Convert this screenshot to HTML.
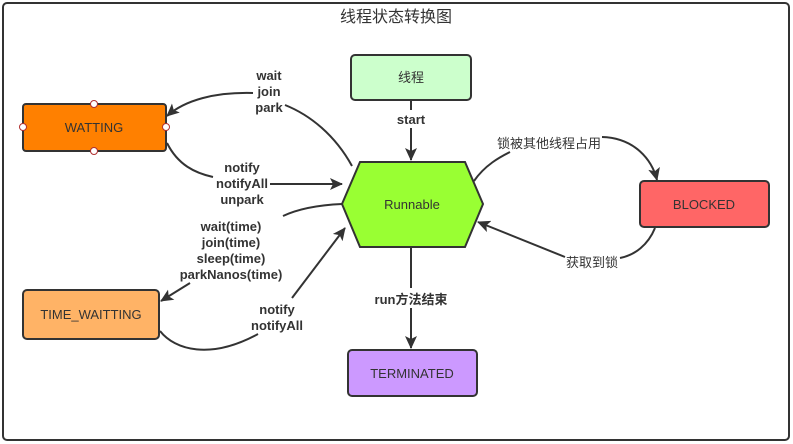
<!DOCTYPE html>
<html><head><meta charset="utf-8"><style>
html,body{margin:0;padding:0;background:#fff;}
svg{display:block;}
text{font-family:"Liberation Sans","Noto Sans CJK SC",sans-serif;fill:#333;}
.b{font-weight:bold;font-size:13px;}
.n{font-size:13px;}
</style></head><body>
<svg width="793" height="444" viewBox="0 0 793 444" xmlns="http://www.w3.org/2000/svg">
<defs><marker id="a" markerWidth="13" markerHeight="12" refX="12" refY="6" orient="auto" markerUnits="userSpaceOnUse"><path d="M0,0 L13,6 L0,12 L3,6 z" fill="#333"/></marker></defs>
<rect x="3" y="3" width="786" height="437" rx="4" fill="#fff" stroke="#333" stroke-width="2"/>
<text x="396" y="22" text-anchor="middle" font-size="16">线程状态转换图</text>
<g fill="none" stroke="#333" stroke-width="2">
<path d="M411,101 L411,110"/><path d="M411,128 L411,160" marker-end="url(#a)"/>
<path d="M352,166 C335,135 310,115 285,105"/>
<path d="M253,93 C215,92 185,100 167,116" marker-end="url(#a)"/>
<path d="M167,143 C178,165 195,173 213,177"/>
<path d="M270,184 L342,184" marker-end="url(#a)"/>
<path d="M342,204 C320,205 300,208 283,216"/>
<path d="M190,283 L161,301" marker-end="url(#a)"/>
<path d="M160,331 C175,350 210,360 258,334"/>
<path d="M292,298 L345,228" marker-end="url(#a)"/>
<path d="M411,247 L411,288"/><path d="M411,308 L411,348" marker-end="url(#a)"/>
<path d="M474,181 C485,165 500,157 510,152"/>
<path d="M602,137 C635,138 652,160 657,180" marker-end="url(#a)"/>
<path d="M655,228 C648,245 635,255 620,258"/>
<path d="M565,257 L478,222" marker-end="url(#a)"/>
</g>
<rect x="351" y="55" width="120" height="45" rx="4" fill="#ccffcc" stroke="#333" stroke-width="2"/>
<text x="411" y="82" text-anchor="middle" class="n">线程</text>
<rect x="23" y="104" width="143" height="47" rx="3" fill="#ff8000" stroke="#333" stroke-width="2"/>
<text x="94" y="132" text-anchor="middle" class="n">WATTING</text>
<g fill="#fff" stroke="#b03030" stroke-width="1"><circle cx="94" cy="104" r="3.5"/><circle cx="94" cy="151" r="3.5"/><circle cx="23" cy="127" r="3.5"/><circle cx="166" cy="127" r="3.5"/></g>
<polygon points="342,204 360,162 465,162 483,204 465,247 360,247" fill="#99ff33" stroke="#333" stroke-width="2"/>
<text x="412" y="209" text-anchor="middle" class="n">Runnable</text>
<rect x="640" y="181" width="129" height="46" rx="4" fill="#ff6666" stroke="#333" stroke-width="2"/>
<text x="704" y="209" text-anchor="middle" class="n">BLOCKED</text>
<rect x="23" y="290" width="136" height="49" rx="4" fill="#ffb366" stroke="#333" stroke-width="2"/>
<text x="91" y="319" text-anchor="middle" class="n">TIME_WAITTING</text>
<rect x="348" y="350" width="129" height="46" rx="4" fill="#cc99ff" stroke="#333" stroke-width="2"/>
<text x="412" y="378" text-anchor="middle" class="n">TERMINATED</text>
<g text-anchor="middle">
<text x="411" y="124" class="b">start</text>
<text x="269" y="80" class="b">wait</text><text x="269" y="96" class="b">join</text><text x="269" y="112" class="b">park</text>
<text x="242" y="172" class="b">notify</text><text x="242" y="188" class="b">notifyAll</text><text x="242" y="204" class="b">unpark</text>
<text x="231" y="231" class="b">wait(time)</text><text x="231" y="247" class="b">join(time)</text><text x="231" y="263" class="b">sleep(time)</text><text x="231" y="279" class="b">parkNanos(time)</text>
<text x="277" y="314" class="b">notify</text><text x="277" y="330" class="b">notifyAll</text>
<text x="411" y="304" class="b">run方法结束</text>
</g>
<text x="549" y="148" text-anchor="middle" class="n">锁被其他线程占用</text>
<text x="592" y="267" text-anchor="middle" class="n">获取到锁</text>
</svg>
</body></html>
